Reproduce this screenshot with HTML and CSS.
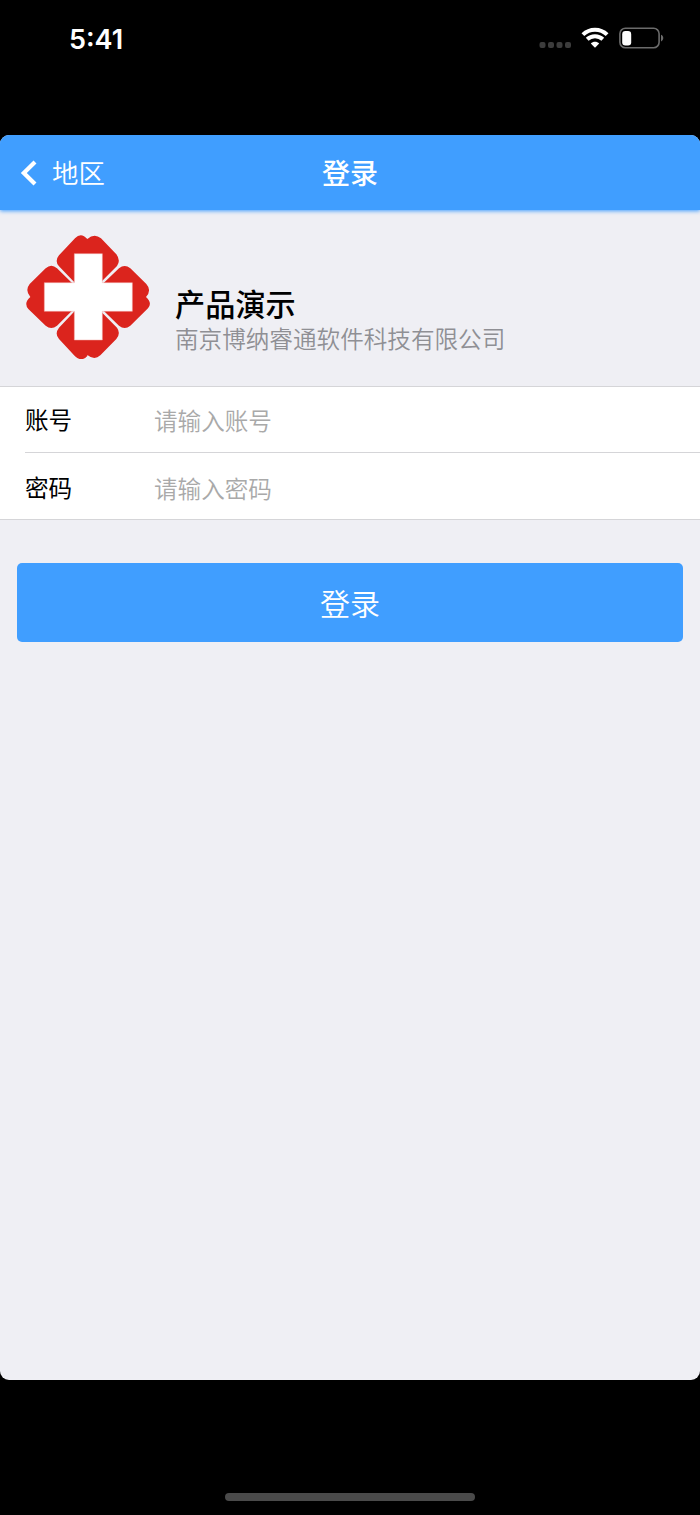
FILE: index.html
```
<!DOCTYPE html>
<html lang="zh-CN">
<head>
    <meta charset="UTF-8">
    <meta name="viewport" content="width=device-width, initial-scale=1.0">
    <title>登录</title>
    <link rel="stylesheet" href="styles.css">
</head>
<body>

<!-- Status bar -->
<div class="status-bar">
    <span class="time">5:41</span>
    <div class="status-icons">
        <svg class="signal" width="32" height="6" viewBox="0 0 32 6" fill="#3c3c3c">
            <rect x="0.5" y="0" width="6" height="6" rx="2"/>
            <rect x="9" y="0" width="6" height="6" rx="2"/>
            <rect x="17.5" y="0" width="6" height="6" rx="2"/>
            <rect x="26" y="0" width="6" height="6" rx="2"/>
        </svg>
        <svg class="wifi" width="28" height="21" viewBox="0 0 28 21">
            <g fill="none" stroke="#fff" stroke-width="4">
                <path d="M1.9 7.6C8.7 1 19.3 1 26.1 7.6"/>
                <path d="M6.2 12.2C10.5 8.1 17.5 8.1 21.8 12.2"/>
            </g>
            <path d="M14 20.8L9.8 16.4C12 14.2 16 14.2 18.2 16.4Z" fill="#fff"/>
        </svg>
        <svg class="battery" width="45" height="22" viewBox="0 0 45 22">
            <rect x="0.9" y="1.2" width="39.2" height="19.6" rx="5.5" fill="none" stroke="#6b6b6b" stroke-width="1.6"/>
            <rect x="3.2" y="4" width="9" height="14.5" rx="3.2" fill="#fff"/>
            <path d="M42 7.8C45 8.8 45 13.4 42 14.4Z" fill="#6b6b6b"/>
        </svg>
    </div>
</div>

<div class="screen">
    <!-- Title bar -->
    <header class="nav">
        <a class="back" href="#">
            <svg width="18" height="26" viewBox="0 0 18 26" fill="none" stroke="#fff" stroke-width="4.2">
                <path d="M15 2L3.8 13L15 24"/>
            </svg>
            <span>地区</span>
        </a>
        <h1>登录</h1>
    </header>

    <!-- Product info -->
    <div class="brand">
        <svg class="logo" width="125" height="125" viewBox="30 27 375 375">
            <g fill="#db241d">
                <path d="M217 212L132 124Q118 108 132 91L180 40Q198 20 217 42Q238 23 258 40L304 88Q318 106 306 123Z"/>
                <path d="M217 393Q200 412 180 394L132 342Q118 326 132 308L217 218L306 308Q318 325 304 342L256 391Q238 407 217 390Z"/>
                <path d="M213 215L126 130Q109 115 92 130L44 177Q29 196 46 216Q25 234 40 252L92 302Q109 316 126 302Z"/>
                <path d="M223 215L312 130Q329 116 346 130L394 177Q411 196 393 216Q413 234 399 250L346 302Q329 316 312 302Z"/>
            </g>
            <path d="M178 86H262V173H352V259H262V345H178V259H88V173H178Z" fill="#fff" stroke="#f3aaa7" stroke-width="1.5"/>
        </svg>
        <div class="brand-text">
            <h2>产品演示</h2>
            <p>南京博纳睿通软件科技有限公司</p>
        </div>
    </div>

    <!-- Login form -->
    <form class="login-form">
        <div class="form-list">
            <div class="form-row">
                <label for="account">账号</label>
                <input type="text" id="account" name="account" placeholder="请输入账号">
            </div>
            <div class="form-row">
                <label for="password">密码</label>
                <input type="password" id="password" name="password" placeholder="请输入密码">
            </div>
        </div>
        <button type="submit" class="btn">登录</button>
    </form>
</div>

<div class="home-bar"></div>

</body>
</html>
```
FILE: styles.css
```
* {
    box-sizing: border-box;
}

body {
    margin: 0;
    height: 1515px;
    display: flex;
    flex-direction: column;
    background-color: #000;
    font-family: "Noto Sans CJK SC", sans-serif;
}

.status-bar {
    height: 135px;
    padding: 27px 36px 0 69px;
    display: flex;
    justify-content: space-between;
    align-items: flex-start;
    color: #fff;
}

.time {
    font-family: Inter, sans-serif;
    font-size: 27px;
    font-weight: 600;
    line-height: 25px;
}

.status-icons {
    display: flex;
}

.signal {
    margin: 15px 10px 0 0;
}

.wifi {
    margin-right: 10px;
}

.screen {
    height: 1245px;
    border-radius: 9px;
    overflow: hidden;
    background-color: #efeff4;
}

/* Title bar */
.nav {
    height: 75px;
    padding: 0 20px 2px;
    display: grid;
    grid-template-columns: 1fr auto 1fr;
    align-items: center;
    background-color: #409eff;
    box-shadow: 0 1px 4px #409eff;
    color: #fff;
}

.back {
    display: flex;
    align-items: center;
    gap: 14px;
    color: #fff;
    font-size: 26.4px;
    font-weight: 350;
    line-height: 38px;
    text-decoration: none;
}

.back svg {
    margin-top: 2px;
}

.nav h1 {
    margin: 0;
    font-size: 28px;
    font-weight: 500;
    line-height: 40px;
}

/* Product info */
.brand {
    height: 176px;
    padding: 24px 25px 0;
    display: flex;
    gap: 25px;
}

.brand-text {
    padding-top: 49px;
}

.brand-text h2 {
    margin: 0;
    font-size: 30.2px;
    font-weight: 500;
    line-height: 40px;
}

.brand-text p {
    margin: 0;
    color: #8f8f94;
    font-size: 23.6px;
    font-weight: 350;
    line-height: 30px;
}

/* Login form */
.form-list {
    border-top: 1px solid #d5d5d8;
    border-bottom: 1px solid #d5d5d8;
    background-color: #fff;
}

.form-row {
    height: 65px;
    margin-left: 25px;
    padding-bottom: 2px;
    display: flex;
    align-items: center;
}

.form-row + .form-row {
    height: 67px;
    padding: 2px 0 0;
    border-top: 1px solid #d5d5d8;
}

.form-row label {
    width: 129px;
    font-size: 23.6px;
    font-weight: 400;
    line-height: 34px;
}

.form-row input {
    flex: 1;
    height: 40px;
    padding: 2px 0 0;
    border: none;
    outline: none;
    background-color: transparent;
    font-family: inherit;
    font-size: 23.6px;
    font-weight: 350;
}

.form-row input::placeholder {
    color: #a9a9a9;
}

.btn {
    display: block;
    width: 666px;
    height: 79px;
    margin: 43px auto 0;
    padding: 0 0 2px;
    border: none;
    border-radius: 5px;
    background-color: #409eff;
    color: #fff;
    font-family: inherit;
    font-size: 30px;
    font-weight: 350;
}

.home-bar {
    width: 250px;
    height: 8px;
    margin: 113px auto 0;
    border-radius: 4px;
    background-color: #4a4a4a;
}
```
